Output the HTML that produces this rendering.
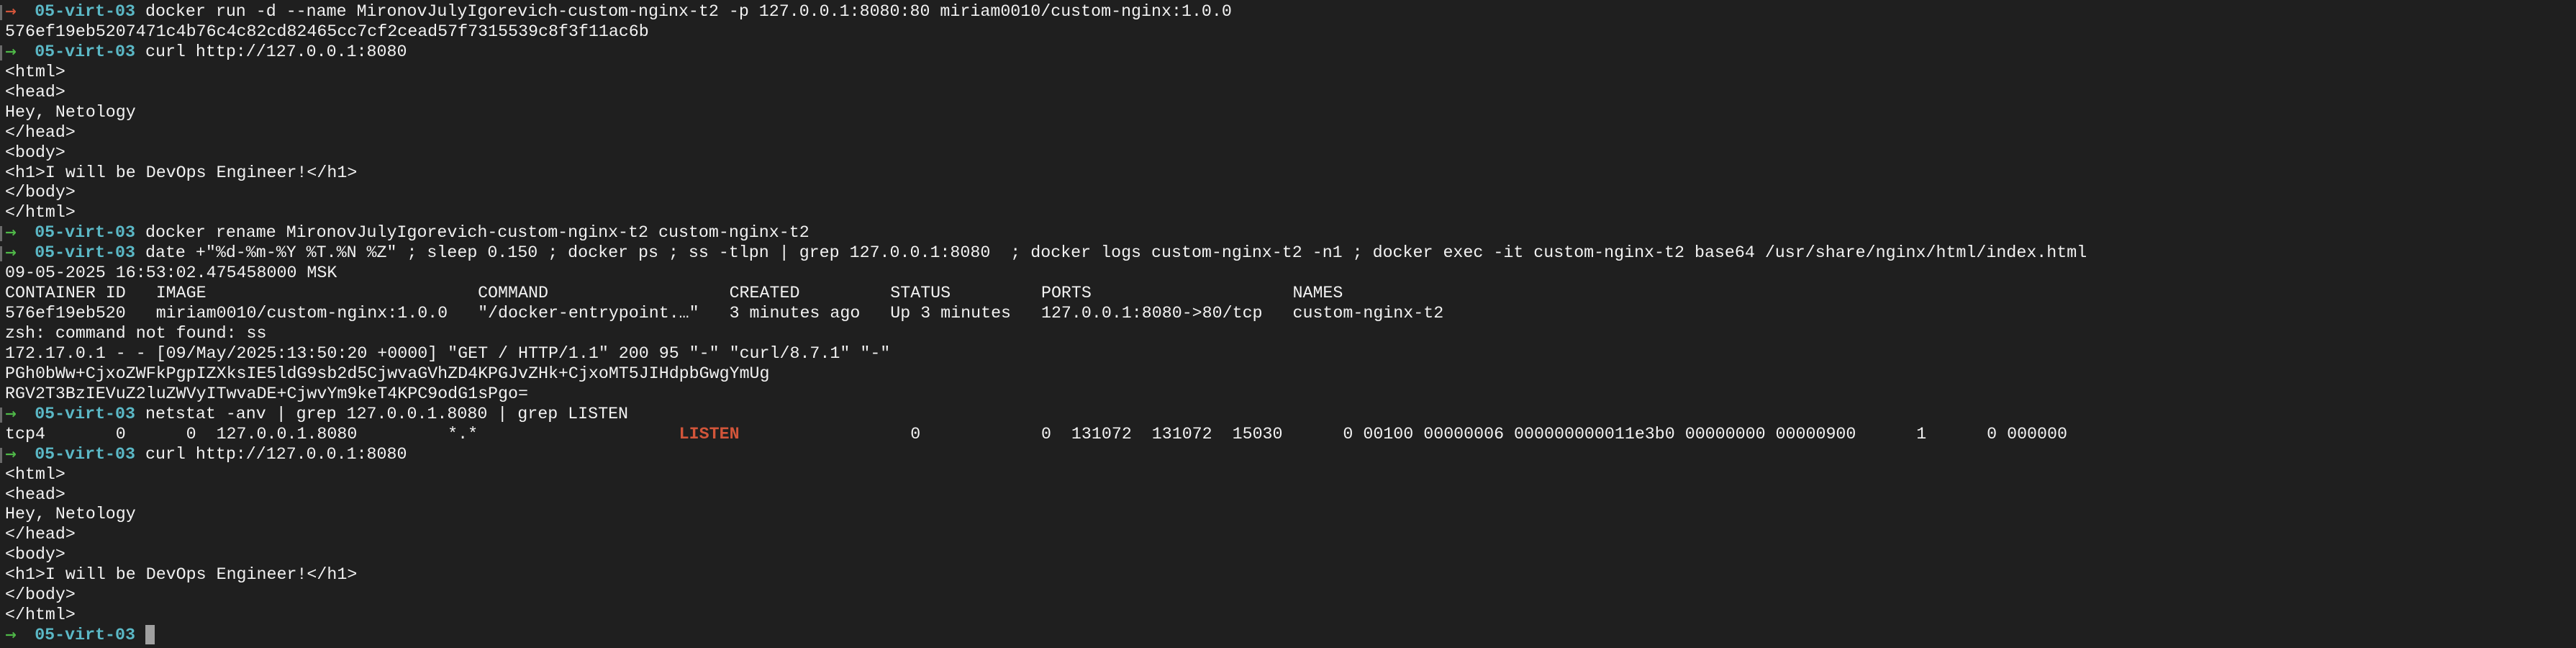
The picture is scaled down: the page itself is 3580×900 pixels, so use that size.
<!DOCTYPE html>
<html><head><meta charset="utf-8"><style>
html,body{margin:0;padding:0;background:#1f1f1f;}
body{width:3580px;height:900px;overflow:hidden;position:relative;}
#t{position:absolute;left:7px;top:3px;font-family:"Liberation Mono","DejaVu Sans Mono",monospace;font-size:23.3px;color:#f2f2f2;}
.l{height:27.95px;line-height:27.95px;white-space:pre;position:relative;}
.c{color:#5bb8c6;font-weight:bold;}
.a{display:inline-block;width:1ch;overflow:visible;font-family:"DejaVu Sans",sans-serif;font-weight:bold;font-size:19px;}
.g{color:#4fb848;}
.r{color:#d2553a;}
.br{position:absolute;left:-7px;top:4px;width:3px;height:21px;background:#6a6a6a;}
.p{position:absolute;top:0;}
.L{color:#d2553a;font-weight:bold;}
.cur{display:inline-block;width:13px;height:27px;background:#a0a0a0;vertical-align:top;margin-top:-1px;}
</style></head><body><div id="t">
<div class="l"><span class="br"></span><span class="a r">→</span>  <span class="c">05-virt-03</span> docker run -d --name MironovJulyIgorevich-custom-nginx-t2 -p 127.0.0.1:8080:80 miriam0010/custom-nginx:1.0.0</div>
<div class="l">576ef19eb5207471c4b76c4c82cd82465cc7cf2cead57f7315539c8f3f11ac6b</div>
<div class="l"><span class="br"></span><span class="a g">→</span>  <span class="c">05-virt-03</span> curl http://127.0.0.1:8080</div>
<div class="l">&lt;html&gt;</div>
<div class="l">&lt;head&gt;</div>
<div class="l">Hey, Netology</div>
<div class="l">&lt;/head&gt;</div>
<div class="l">&lt;body&gt;</div>
<div class="l">&lt;h1&gt;I will be DevOps Engineer!&lt;/h1&gt;</div>
<div class="l">&lt;/body&gt;</div>
<div class="l">&lt;/html&gt;</div>
<div class="l"><span class="br"></span><span class="a g">→</span>  <span class="c">05-virt-03</span> docker rename MironovJulyIgorevich-custom-nginx-t2 custom-nginx-t2</div>
<div class="l"><span class="br"></span><span class="a g">→</span>  <span class="c">05-virt-03</span> date +"%d-%m-%Y %T.%N %Z" ; sleep 0.150 ; docker ps ; ss -tlpn | grep 127.0.0.1:8080  ; docker logs custom-nginx-t2 -n1 ; docker exec -it custom-nginx-t2 base64 /usr/share/nginx/html/index.html</div>
<div class="l">09-05-2025 16:53:02.475458000 MSK</div>
<div class="l"><span class="p" style="left:0ch">CONTAINER ID</span><span class="p" style="left:15ch">IMAGE</span><span class="p" style="left:47ch">COMMAND</span><span class="p" style="left:72ch">CREATED</span><span class="p" style="left:88ch">STATUS</span><span class="p" style="left:103ch">PORTS</span><span class="p" style="left:128ch">NAMES</span></div>
<div class="l"><span class="p" style="left:0ch">576ef19eb520</span><span class="p" style="left:15ch">miriam0010/custom-nginx:1.0.0</span><span class="p" style="left:47ch">"/docker-entrypoint.…"</span><span class="p" style="left:72ch">3 minutes ago</span><span class="p" style="left:88ch">Up 3 minutes</span><span class="p" style="left:103ch">127.0.0.1:8080-&gt;80/tcp</span><span class="p" style="left:128ch">custom-nginx-t2</span></div>
<div class="l">zsh: command not found: ss</div>
<div class="l">172.17.0.1 - - [09/May/2025:13:50:20 +0000] "GET / HTTP/1.1" 200 95 "-" "curl/8.7.1" "-"</div>
<div class="l">PGh0bWw+CjxoZWFkPgpIZXksIE5ldG9sb2d5CjwvaGVhZD4KPGJvZHk+CjxoMT5JIHdpbGwgYmUg</div>
<div class="l">RGV2T3BzIEVuZ2luZWVyITwvaDE+CjwvYm9keT4KPC9odG1sPgo=</div>
<div class="l"><span class="br"></span><span class="a g">→</span>  <span class="c">05-virt-03</span> netstat -anv | grep 127.0.0.1.8080 | grep LISTEN</div>
<div class="l"><span class="p" style="left:0ch">tcp4</span><span class="p" style="left:11ch">0</span><span class="p" style="left:18ch">0</span><span class="p" style="left:21ch">127.0.0.1.8080</span><span class="p" style="left:44ch">*.*</span><span class="p L" style="left:67ch">LISTEN</span><span class="p" style="left:90ch">0</span><span class="p" style="left:103ch">0</span><span class="p" style="left:106ch">131072</span><span class="p" style="left:114ch">131072</span><span class="p" style="left:122ch">15030</span><span class="p" style="left:133ch">0 00100 00000006 000000000011e3b0 00000000 00000900</span><span class="p" style="left:190ch">1</span><span class="p" style="left:197ch">0 000000</span></div>
<div class="l"><span class="br"></span><span class="a g">→</span>  <span class="c">05-virt-03</span> curl http://127.0.0.1:8080</div>
<div class="l">&lt;html&gt;</div>
<div class="l">&lt;head&gt;</div>
<div class="l">Hey, Netology</div>
<div class="l">&lt;/head&gt;</div>
<div class="l">&lt;body&gt;</div>
<div class="l">&lt;h1&gt;I will be DevOps Engineer!&lt;/h1&gt;</div>
<div class="l">&lt;/body&gt;</div>
<div class="l">&lt;/html&gt;</div>
<div class="l"><span class="a g">→</span>  <span class="c">05-virt-03</span> <span class="cur"></span></div>
</div></body></html>
